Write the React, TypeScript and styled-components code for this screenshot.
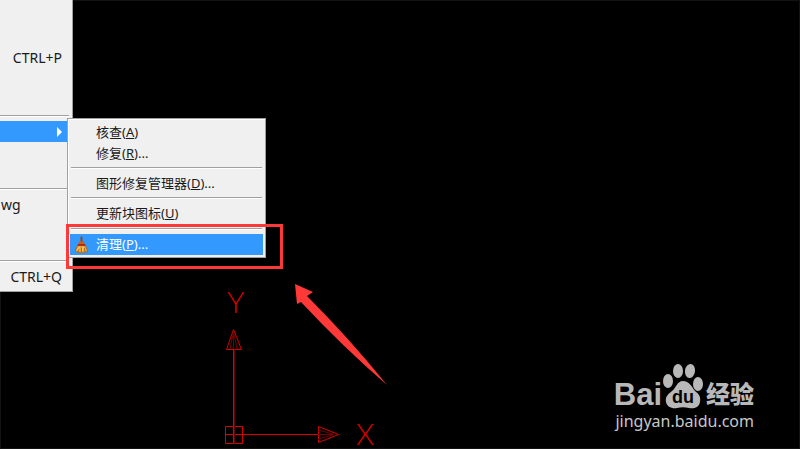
import React from "react";
import styled, { createGlobalStyle } from "styled-components";

const GlobalStyle = createGlobalStyle`
  * { box-sizing: border-box; }
  body { margin: 0; background: #000; }
`;

const Workspace = styled.main`
  position: relative;
  height: 100vh;
  overflow: hidden;
  background: #000;
  box-shadow: inset 0 0 0 1px #121212;
  font-family: "Noto Sans", "Noto Sans CJK SC", sans-serif;
  font-size: 13px;
  line-height: 21px;
  color: #1a1a1a;
`;

const FileMenu = styled.nav`
  position: absolute;
  left: 0;
  top: 0;
  width: 73px;
  background: #f0f0f0;
  border-right: 1px solid #a0a0a0;
  border-bottom: 1px solid #a0a0a0;
`;

const Group = styled.div<{ $height: number; $align?: string }>`
  display: flex;
  flex-direction: column;
  justify-content: ${(p) => p.$align ?? "center"};
  height: ${(p) => p.$height}px;
  padding: 4px 0;
`;

const FileItem = styled.button<{ $active?: boolean; $start?: boolean }>`
  display: flex;
  align-items: center;
  justify-content: ${(p) => (p.$start ? "flex-start" : "flex-end")};
  width: 100%;
  height: 21px;
  padding: ${(p) => (p.$start ? "0 1px" : "0 10px")};
  border: 0;
  background: ${(p) => (p.$active ? "#3399ff" : "transparent")};
  color: inherit;
  font: inherit;
  font-size: 14px;
  white-space: nowrap;
`;

const Divider = styled.hr`
  height: 2px;
  margin: 0 3px 0 0;
  border: 0;
  border-top: 1px solid #a0a0a0;
  border-bottom: 1px solid #fff;
`;

const SubMenu = styled.div`
  position: absolute;
  left: 67px;
  top: 118px;
  width: 199px;
  padding: 3px 2px 2px;
  background: #f0f0f0;
  border: 1px solid #a0a0a0;
  box-shadow: inset 1px 1px #fff;
`;

const SubDivider = styled(Divider)`
  margin: 3px 1px 4px;

  &:last-of-type {
    margin-top: 4px;
  }
`;

const SubItem = styled.button<{ $active?: boolean }>`
  display: grid;
  grid-template-columns: 26px 1fr;
  align-items: center;
  width: 100%;
  height: 21px;
  padding: 0;
  border: 0;
  text-align: left;
  background: ${(p) => (p.$active ? "#3399ff" : "transparent")};
  color: ${(p) => (p.$active ? "#fff" : "inherit")};
  font: inherit;
  white-space: nowrap;
`;

const IconCell = styled.span`
  display: flex;
  padding-left: 5px;
`;

const Highlight = styled.div`
  position: absolute;
  left: 66px;
  top: 224px;
  width: 217px;
  height: 45px;
  border: 3px solid #ff3838;
`;

const Drawing = styled.svg`
  position: absolute;
  left: 0;
  top: 0;
  overflow: visible;
  pointer-events: none;
`;

const AxisLabel = styled.text`
  font-family: Lato, "Open Sans", sans-serif;
  font-weight: 300;
  font-size: 29px;
  fill: #d80000;
`;

const Watermark = styled.aside`
  position: absolute;
  right: 46px;
  bottom: 16px;
  color: #b8b8b8;
`;

const Brand = styled.div`
  display: flex;
  align-items: flex-end;
  height: 46px;
`;

const BrandLatin = styled.span`
  font: bold 31px/28px "Liberation Sans", sans-serif;
`;

const BrandChinese = styled.span`
  margin-left: 2px;
  font: 900 24px/32px "Noto Sans CJK SC", sans-serif;
`;

const PawText = styled.text`
  font: bold 18px "Liberation Sans", sans-serif;
  fill: #000;
`;

const Address = styled.div`
  font: 16px/24px "Noto Sans", sans-serif;
  color: #c8c8c8;
  text-align: right;
`;

const Broom = () => (
  <svg width="13" height="18" viewBox="0 0 14 18" aria-hidden="true">
    <path d="M6 0h2v7H6z" fill="#8c4212" />
    <path d="M5 5h4l2 4H3z" fill="#d05a16" />
    <path d="M3 9h8l3 7q-7 3-14 0z" fill="#e8a83c" stroke="#a8641e" strokeWidth="1" />
    <path d="M3 9h8" stroke="#a52c16" strokeWidth="2" />
    <path d="M4 12l-1 5M7 12v5M10 12l1 5" stroke="#a8641e" />
    <path d="M2 15l3-4M8 15l1-4" stroke="#ffe08a" />
  </svg>
);

const Paw = () => (
  <svg width="42" height="46" viewBox="0 0 42 46" aria-hidden="true">
    <g fill="#b8b8b8">
      <ellipse cx="6" cy="18" rx="5" ry="7" />
      <ellipse cx="16" cy="8" rx="5" ry="7" />
      <ellipse cx="28" cy="8" rx="5" ry="7" transform="rotate(8 28 8)" />
      <ellipse cx="36" cy="21" rx="5" ry="7" />
      <path d="M21 18c6 0 9 6 12 10 4 3 6 6 5 11-1 6-7 7-11 6-4-1-8-1-12 0-5 1-10-1-11-6-1-5 2-8 6-11s5-10 11-10z" />
    </g>
    <PawText x="10" y="40">du</PawText>
  </svg>
);

const items = [
  [{ label: "核查", key: "A", dots: "" }, { label: "修复", key: "R", dots: "..." }],
  [{ label: "图形修复管理器", key: "D", dots: "..." }],
  [{ label: "更新块图标", key: "U", dots: "" }],
  [{ label: "清理", key: "P", dots: "...", active: true }],
];

export default function App() {
  return (
    <Workspace>
      <GlobalStyle />
      <Drawing width="400" height="449" viewBox="0 0 400 449" fill="none" stroke="#d80000">
        <path d="M225.500 426.500h17v17h-17zM225 434.500h93" />
        <path d="M226.500 349.500l7-20 8 20zM318.500 426.500v16l20-8z" />
        <path d="M230 349l3-15M233.500 349v-16M237 349l-3-15M318 430l15 4M318 434.500h16M318 439l15-4" stroke="#700000" />
        <g stroke="none">
          <rect x="233" y="349" width="1" height="95" fill="#e00000" />
          <rect x="234" y="349" width="1" height="95" fill="#700000" />
          <AxisLabel x="227" y="313">Y</AxisLabel>
          <AxisLabel x="356" y="445">X</AxisLabel>
          <path d="M295 284l18 8-6 4q42 42 80 89-44-38-86-83l-4 2z" fill="#ff3838" />
        </g>
      </Drawing>
      <FileMenu aria-label="文件">
        <Group $height={115}>
          <FileItem>CTRL+P</FileItem>
        </Group>
        <Divider />
        <Group $height={71} $align="flex-start">
          <FileItem $active aria-label="图形实用工具">
            <svg width="6" height="10" viewBox="0 0 6 10" aria-hidden="true">
              <path d="M1 0l5 5-5 5z" fill="#fff" />
            </svg>
          </FileItem>
        </Group>
        <Divider />
        <Group $height={70} $align="flex-start">
          <FileItem $start>wg</FileItem>
        </Group>
        <Divider />
        <Group $height={29}>
          <FileItem>CTRL+Q</FileItem>
        </Group>
      </FileMenu>
      <SubMenu role="menu">
        {items.map((group, i) => (
          <React.Fragment key={i}>
            {i > 0 && <SubDivider />}
            {group.map((item) => (
              <SubItem key={item.key} role="menuitem" $active={"active" in item}>
                <IconCell>{"active" in item && <Broom />}</IconCell>
                <span>
                  {item.label}(<u>{item.key}</u>){item.dots}
                </span>
              </SubItem>
            ))}
          </React.Fragment>
        ))}
      </SubMenu>
      <Highlight />
      <Watermark>
        <Brand>
          <BrandLatin>Bai</BrandLatin>
          <Paw />
          <BrandChinese>经验</BrandChinese>
        </Brand>
        <Address>jingyan.baidu.com</Address>
      </Watermark>
    </Workspace>
  );
}
